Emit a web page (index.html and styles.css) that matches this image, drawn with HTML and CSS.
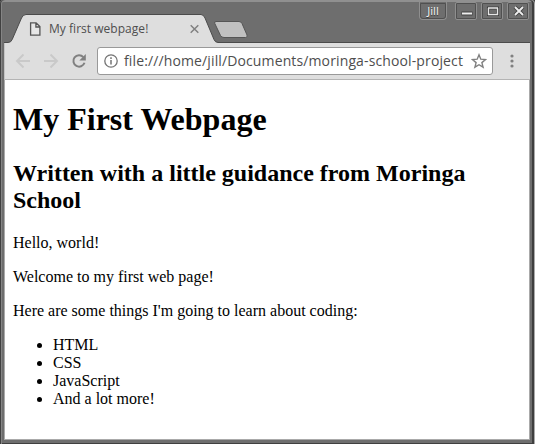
FILE: index.html
```
<!DOCTYPE html>
<html lang="en">
<head>
<meta charset="utf-8">
<title>My first webpage!</title>
<link rel="stylesheet" href="styles.css">
</head>
<body>
<div class="window">
  <header class="tabstrip">
    <svg class="tabshape" width="535" height="43" viewBox="0 0 535 43">
      <path d="M4 43V42.5H8Q11 42.5 12.2 39.5L21.5 18Q23 14.5 26 14.5H201Q203.500 14.500 205 18L214 39.500Q215.200 42.500 218 42.500H530V43Z" fill="#dedede"/>
      <path d="M4 42.5H8Q11 42.500 12.200 39.500L21.500 18Q23 14.500 26 14.500H201Q203.500 14.500 205 18L214 39.500Q215.200 42.500 218 42.500H530" fill="none" stroke="#4b4b4b"/>
      <path d="M216 21.500H239Q241 21.500 242 23.500L247 35Q248 37.500 245.500 37.500H224Q221.500 37.500 220.500 35.500L214.800 23.500Q214 21.500 216 21.500Z" fill="#c0c0c0" stroke="#555"/>
    </svg>
    <div class="tab">
      <svg width="12" height="14" viewBox="0 0 12 14"><path d="M1.600 .8H7.100L10.900 4.600V13.200H1.600Z M6.900 1V5H10.600" fill="#e7e7e7" stroke="#555" stroke-width="1.300"/></svg>
      <span class="title">My first webpage!</span>
      <svg width="10" height="10" viewBox="0 0 10 10"><path d="M.7 1.200L8.300 8.800M8.300 1.200L.7 8.800" stroke="#808080" stroke-width="1.500"/></svg>
    </div>
    <div class="controls">
      <span class="user">Jill</span>
      <span class="button"><svg width="22" height="16" viewBox="0 0 22 16"><path d="M5.500 10.500H16.500" stroke="#404040" stroke-width="4"/><path d="M6 10.500H16" stroke="#eee" stroke-width="2"/></svg></span>
      <span class="button"><svg width="22" height="16" viewBox="0 0 22 16"><rect x="6.500" y="5" width="9" height="6.500" fill="none" stroke="#404040" stroke-width="3"/><path d="M6 5H16M6.500 5V12M15.500 5V12M6 11.500H16" fill="none" stroke="#e6e6e6" stroke-width="1.400"/></svg></span>
      <span class="button"><svg width="22" height="16" viewBox="0 0 22 16"><path d="M7 4L15 12M15 4L7 12" stroke="#404040" stroke-width="3.800"/><path d="M7 4L15 12M15 4L7 12" stroke="#eee" stroke-width="1.900"/></svg></span>
    </div>
  </header>
  <nav class="toolbar">
    <svg class="nav" width="66" height="36" viewBox="0 0 66 36" fill="none">
      <path d="M25 18H12.500M18.500 11.500L12 18L18.500 24.500M39 18H51.500M45.500 11.500L52 18L45.500 24.500" stroke="#c9c9c9" stroke-width="1.900"/>
    </svg>
    <svg class="reload" width="16" height="16" viewBox="0 0 16 16"><path d="M12.300 4.100A5.700 5.700 0 1 0 13.500 9.800" fill="none" stroke="#808080" stroke-width="2"/><path d="M14.800 1V7.500H8.300Z" fill="#808080"/></svg>
    <div class="address">
      <svg width="14" height="14" viewBox="0 0 14 14"><circle cx="7" cy="7" r="6.200" fill="none" stroke="#747474" stroke-width="1.300"/><path d="M7 6V10.500M7 3.300V4.900" stroke="#747474" stroke-width="1.500"/></svg>
      <span class="url">file:///home/jill/Documents/moringa-school-project</span>
      <svg width="16" height="16" viewBox="0 0 16 16"><path d="M8 1.800L9.800 6.200L14.500 6.500L10.900 9.600L12.100 14.200L8 11.700L3.900 14.200L5.100 9.600L1.500 6.500L6.200 6.200Z" fill="none" stroke="#808080" stroke-width="1.400"/></svg>
    </div>
    <svg class="menu" width="4" height="14" viewBox="0 0 4 14" fill="#808080"><circle cx="2" cy="2" r="1.600"/><circle cx="2" cy="7" r="1.600"/><circle cx="2" cy="12" r="1.600"/></svg>
  </nav>
  <main class="page">
    <h1>My First Webpage</h1>
    <h2>Written with a little guidance from Moringa School</h2>
    <p>Hello, world!</p>
    <p>Welcome to my first web page!</p>
    <p>Here are some things I'm going to learn about coding:</p>
    <ul>
      <li>HTML</li>
      <li>CSS</li>
      <li>JavaScript</li>
      <li>And a lot more!</li>
    </ul>
  </main>
</div>
</body>
</html>
```
FILE: styles.css
```
* { box-sizing: border-box; }
body { margin: 0; overflow: hidden; background: #3c3c3c; }
svg { display: block; flex: none; }
.window {
  position: relative;
  width: 535px;
  height: 444px;
  display: flex;
  flex-direction: column;
  padding: 0 5px 4px 4px;
  background: #6e6e6e;
  border-radius: 4px 4px 0 0;
  box-shadow: inset 1px 0 #414141, inset 2px 0 #858585, inset -1px 0 #aaa, inset -3px 0 #3f3f3f, inset 0 -1px #3f3f3f, inset 0 2px #909090;
}
.tabstrip {
  flex: none;
  height: 43px;
  display: flex;
  justify-content: space-between;
  align-items: flex-start;
}
.tabshape { position: absolute; left: 0; top: 0; }
.tab {
  position: relative;
  display: flex;
  align-items: center;
  width: 171px;
  height: 28px;
  margin: 15px 0 0 25px;
  font: 12px "Open Sans", "Noto Sans", sans-serif;
  color: #4e4e4e;
}
.title { flex: 1; margin-left: 8px; padding-bottom: 1px; letter-spacing: .03px; white-space: nowrap; }
.controls { position: relative; display: flex; margin: 2px 1px 0 0; gap: 4px; }
.user, .button {
  height: 18px;
  border: 1px solid #8f8f8f;
  border-radius: 2px;
  outline: 1px solid #505050;
  outline-offset: -2px;
}
.button { width: 22px; display: grid; place-items: center; }
.user {
  width: 28px;
  margin-right: 4px;
  border-top: 0;
  border-radius: 0 0 4px 4px;
  text-align: center;
  font: 11px/18px "Noto Sans", "Open Sans", sans-serif;
  color: #f2f2f2;
  text-shadow: 0 1px 1px #333;
}
.toolbar {
  flex: none;
  display: flex;
  align-items: center;
  height: 37px;
  background: #dedede;
  border-bottom: 1px solid #b4b4b4;
  border-left: 1px solid #c4c4c4;
}
.address {
  width: 396px;
  height: 28px;
  display: flex;
  align-items: center;
  margin-left: 10px;
  padding: 0 5px 0 6px;
  background: #fff;
  border: 1px solid #999;
  border-radius: 3px;
}
.url {
  flex: 1;
  margin-left: 6px;
  padding-bottom: 1px;
  white-space: nowrap;
  font: 14px "Open Sans", "Noto Sans", sans-serif;
  letter-spacing: .125px;
  color: #4e4e4e;
}
.menu { margin-left: 17px; }
.page {
  flex: 1;
  overflow: hidden;
  padding: 0 8px;
  background: #fff;
  border: solid #aaa;
  border-width: 0 1px 1px;
  font: 16px "Liberation Serif", serif;
  color: #000;
}
h1 { font-size: 32px; margin: 21.44px 0; }
h2 { font-size: 24px; margin: 19.92px 0; }
p, ul { margin: 16px 0; }
ul { padding-left: 40px; }
```
